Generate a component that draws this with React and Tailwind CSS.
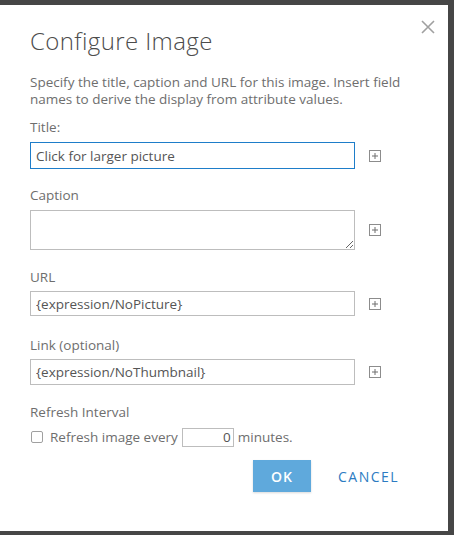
import React, { useState } from 'react';

function PlusBox() {
  return (
    <svg width="12" height="12" viewBox="0 0 12 12" className="shrink-0">
      <rect x="0.5" y="0.5" width="11" height="11" fill="none" stroke="#8c8c8c" />
      <path d="M6 3v6M3 6h6" stroke="#6e6e6e" strokeWidth="1" />
    </svg>
  );
}

function Field({ label, className, gap, children }) {
  return (
    <div className={className}>
      <div className="text-[13.5px] leading-[17px] text-[#6e6e6e]">{label}</div>
      <div className={`flex items-center ${gap}`}>
        {children}
        <div className="ml-[14px]">
          <PlusBox />
        </div>
      </div>
    </div>
  );
}

export default function App() {
  const [title, setTitle] = useState('Click for larger picture');
  const [caption, setCaption] = useState('');
  const [url, setUrl] = useState('{expression/NoPicture}');
  const [link, setLink] = useState('{expression/NoThumbnail}');
  const [minutes, setMinutes] = useState('0');

  return (
    <div className="w-[454px] h-[535px] bg-[#464646] pt-[5px] overflow-hidden" style={{ fontFamily: '"Open Sans", Lato, sans-serif' }}>
      <div className="relative w-[448px] h-[526px] bg-white pl-[30px] pt-[21px]">
        <button className="absolute top-[14px] right-[12px]">
          <svg width="16" height="16" viewBox="0 0 16 16">
            <path d="M2 2l12 12M14 2L2 14" stroke="#a0a0a0" strokeWidth="1.6" />
          </svg>
        </button>

        <h1 className="text-[24px] leading-[30px] font-light tracking-[0.4px] text-[#4c4c4c]">Configure Image</h1>

        <p className="mt-[18px] w-[400px] text-[13.5px] leading-[17px] text-[#6e6e6e]">
          Specify the title, caption and URL for this image. Insert field names to derive the display from attribute values.
        </p>

        <Field label="Title:" className="mt-[11px]" gap="mt-[6px]">
          <input
            className="w-[325px] h-[27px] border border-[#1e7dc9] px-[5px] text-[13.5px] text-[#555] outline-none"
            value={title}
            onChange={(e) => setTitle(e.target.value)}
          />
        </Field>

        <Field label="Caption" className="mt-[18px]" gap="mt-[6px]">
          <textarea
            className="w-[325px] h-[40px] border border-[#bdbdbd] px-[5px] text-[13.5px] text-[#555] outline-none block"
            value={caption}
            onChange={(e) => setCaption(e.target.value)}
          />
        </Field>

        <Field label="URL" className="mt-[19px]" gap="mt-[5px]">
          <input
            className="w-[325px] h-[25px] border border-[#bdbdbd] px-[5px] text-[13.5px] text-[#555] outline-none"
            value={url}
            onChange={(e) => setUrl(e.target.value)}
          />
        </Field>

        <Field label="Link (optional)" className="mt-[21px]" gap="mt-[5px]">
          <input
            className="w-[325px] h-[26px] border border-[#bdbdbd] px-[5px] text-[13.5px] text-[#555] outline-none"
            value={link}
            onChange={(e) => setLink(e.target.value)}
          />
        </Field>

        <div className="mt-[19px]">
          <div className="text-[13.5px] leading-[17px] text-[#6e6e6e]">Refresh Interval</div>
          <div className="flex items-center mt-[6px] text-[13.5px] text-[#6e6e6e]">
            <input type="checkbox" className="w-[12px] h-[12px] ml-[1px] appearance-none border border-[#a0a0a0] rounded-[2px] bg-white" />
            <span className="ml-[7px]">Refresh image every</span>
            <input
              className="ml-[4px] w-[52px] h-[19px] border border-[#bdbdbd] px-[2px] text-right text-[13.5px] text-[#555] outline-none"
              value={minutes}
              onChange={(e) => setMinutes(e.target.value)}
            />
            <span className="ml-[4px]">minutes.</span>
          </div>
        </div>

        <div className="flex items-center mt-[13px] ml-[223px]">
          <button className="w-[58px] h-[32px] bg-[#5fa9dc] text-white text-[14px] font-semibold tracking-[1px] shadow-[0_1px_2px_rgba(0,0,0,0.15)]">
            OK
          </button>
          <button className="ml-[27px] text-[14px] text-[#2c7bc2] tracking-[1.5px]">CANCEL</button>
        </div>
      </div>
    </div>
  );
}
